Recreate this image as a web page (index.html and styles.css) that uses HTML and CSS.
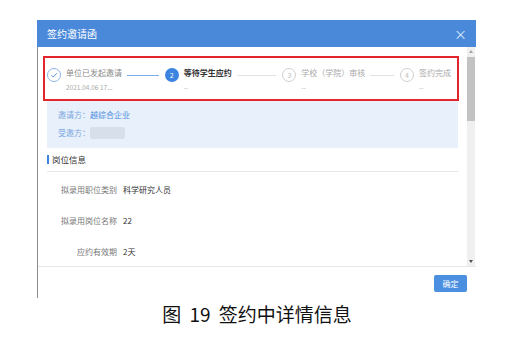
FILE: index.html
```html
<!DOCTYPE html>
<html>
<head>
<meta charset="utf-8">
<title>签约邀请函</title>
<link rel="stylesheet" href="styles.css">
</head>
<body>
<div class="page">
  <div class="dialog">
    <div class="dialog-header">
      <span class="dialog-title">签约邀请函</span>
      <span class="dialog-close">&times;</span>
    </div>
    <div class="dialog-main">
      <div class="dialog-body">
        <div class="content">
          <div class="steps">
            <div class="step done">
              <span class="step-icon">
                <svg width="8" height="8" viewBox="0 0 8 8"><path d="M1.3 4.2 L3.2 6 L6.8 2.2" fill="none" stroke="#4a8ad8" stroke-width="0.9"/></svg>
              </span>
              <div class="step-text">
                <div class="step-title">单位已发起邀请</div>
                <div class="step-sub">2021.04.06 17...</div>
              </div>
              <span class="step-line line-done"></span>
            </div>
            <div class="step active">
              <span class="step-icon">2</span>
              <div class="step-text">
                <div class="step-title">等待学生应约</div>
                <div class="step-sub">--</div>
              </div>
              <span class="step-line"></span>
            </div>
            <div class="step">
              <span class="step-icon">3</span>
              <div class="step-text">
                <div class="step-title">学校（学院）审核</div>
                <div class="step-sub">--</div>
              </div>
              <span class="step-line"></span>
            </div>
            <div class="step last">
              <span class="step-icon">4</span>
              <div class="step-text">
                <div class="step-title">签约完成</div>
                <div class="step-sub">--</div>
              </div>
            </div>
          </div>

          <div class="party">
            <div class="party-row"><span class="party-label">邀请方：</span><span class="party-value">越综合企业</span></div>
            <div class="party-row"><span class="party-label">受邀方：</span><span class="party-blank"></span></div>
          </div>

          <div class="section-title">岗位信息</div>

          <div class="fields">
            <div class="field"><span class="field-label">拟录用职位类别</span><span class="field-value">科学研究人员</span></div>
            <div class="field"><span class="field-label">拟录用岗位名称</span><span class="field-value">22</span></div>
            <div class="field"><span class="field-label">应约有效期</span><span class="field-value">2天</span></div>
          </div>
        </div>
        <div class="scrollbar">
          <span class="scroll-btn"><span class="arrow-up"></span></span>
          <span class="scroll-thumb"></span>
          <span class="scroll-fill"></span>
          <span class="scroll-btn"><span class="arrow-down"></span></span>
        </div>
      </div>
      <div class="dialog-footer">
        <button class="btn-ok">确定</button>
      </div>
    </div>
  </div>
  <p class="caption">图 19 签约中详情信息</p>
</div>
</body>
</html>
```

FILE: styles.css
```css
body {
    margin: 0;
    background: #fff;
    font-family: "Noto Sans CJK SC", "Noto Sans", sans-serif;
}

.page {
    padding-top: 20px;
}

.dialog {
    width: 439px;
    margin-left: 37px;
}

.dialog-header {
    height: 27px;
    background-color: #4a89da;
    color: #fff;
    display: flex;
    align-items: center;
    justify-content: space-between;
    padding: 0 9px 0 10px;
}

.dialog-title {
    font-size: 10px;
}

.dialog-close {
    font-size: 13px;
    color: #dfe9f8;
    line-height: 1;
}

.dialog-main {
    border-left: 1px solid #8c8c8c;
}

.dialog-body {
    display: flex;
    height: 219px;
    overflow: hidden;
}

.content {
    flex: 1;
    min-width: 0;
    padding: 0 9px;
}

/* steps bar, framed in red */
.steps {
    display: flex;
    height: 45px;
    box-sizing: border-box;
    margin: 9px -1px 0 -4px;
    border: 2px solid #e3262b;
    padding: 10px 2px 0 2px;
}

.step {
    flex: 1;
    min-width: 0;
    display: flex;
    align-items: flex-start;
}

.step.last {
    flex: none;
    width: 55px;
}

.step-icon {
    flex: none;
    width: 14px;
    height: 14px;
    box-sizing: border-box;
    border-radius: 50%;
    border: 1px solid #cfcfcf;
    color: #bdbdbd;
    font-size: 7px;
    display: flex;
    align-items: center;
    justify-content: center;
}

.step.done .step-icon {
    border-color: #8db3e8;
}

.step.active .step-icon {
    border: none;
    background-color: #3d84e0;
    color: #fff;
}

.step-text {
    margin-left: 5px;
    white-space: nowrap;
}

.step-title {
    font-size: 8px;
    line-height: 10px;
    color: #aaa;
}

.step.done .step-title {
    color: #8a8a8a;
}

.step.active .step-title {
    color: #333;
    font-weight: bold;
}

.step-sub {
    margin-top: 4px;
    font-size: 6.5px;
    line-height: 10px;
    color: #aaa;
}

.step-line {
    flex: 1;
    height: 0;
    margin: 7px 6px 0 5px;
    border-top: 1px solid #e2e2e2;
}

.line-done {
    border-top-color: #78acec;
}

/* inviter / invitee */
.party {
    height: 47px;
    box-sizing: border-box;
    background-color: #e7f0fb;
    padding: 8px 11px 0;
    font-size: 8px;
    line-height: 12px;
}

.party-row + .party-row {
    margin-top: 6px;
}

.party-row {
    display: flex;
    align-items: center;
}

.party-label {
    color: #7eaae0;
}

.party-value {
    color: #4f8edb;
}

.party-blank {
    width: 35px;
    height: 12px;
    border-radius: 2px;
    background-color: #d6dfea;
}

.section-title {
    margin-top: 5px;
    padding: 0 0 6px 5px;
    font-size: 8.5px;
    line-height: 12px;
    color: #333;
    border-bottom: 1px solid #e6e6e6;
    position: relative;
}

.section-title::before {
    content: "";
    position: absolute;
    left: 0;
    top: 2px;
    width: 2px;
    height: 9px;
    background-color: #3d84e0;
}

.fields {
    padding-top: 2px;
}

.field {
    display: flex;
    font-size: 8px;
    line-height: 31px;
}

.field-label {
    width: 70px;
    text-align: right;
    color: #777;
}

.field-value {
    margin-left: 6px;
    color: #333;
}

/* fake scrollbar */
.scrollbar {
    flex: none;
    width: 8px;
    margin-right: 1px;
    background-color: #f0f0f0;
    display: flex;
    flex-direction: column;
}

.scroll-btn {
    height: 9px;
    display: flex;
    align-items: center;
    justify-content: center;
}

.arrow-up {
    border-left: 2.5px solid transparent;
    border-right: 2.5px solid transparent;
    border-bottom: 3px solid #a3a3a3;
}

.arrow-down {
    border-left: 2.5px solid transparent;
    border-right: 2.5px solid transparent;
    border-top: 3px solid #505050;
}

.scroll-thumb {
    height: 64px;
    margin-top: 1px;
    background-color: #c2c2c2;
}

.scroll-fill {
    flex: 1;
}

.dialog-footer {
    height: 32px;
    box-sizing: border-box;
    border-top: 1px solid #e6e6e6;
    display: flex;
    justify-content: flex-end;
    align-items: flex-start;
    padding: 8px 9px 0 0;
}

.btn-ok {
    width: 33px;
    height: 17px;
    border: none;
    border-radius: 2px;
    background-color: #4a8fe0;
    color: #fff;
    font-family: inherit;
    font-size: 8px;
    padding: 0;
}

.caption {
    margin: 3px 0 0;
    text-align: center;
    font-size: 19px;
    line-height: 26px;
    color: #111;
    word-spacing: 4px;
}
```
